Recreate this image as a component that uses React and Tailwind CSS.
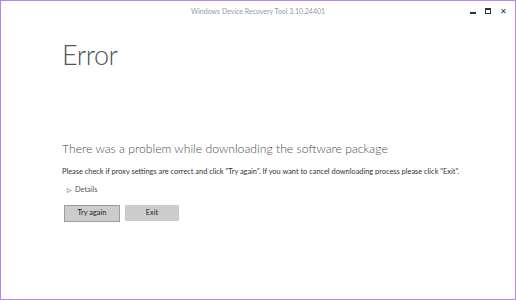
import { useState } from 'react';

export default function App() {
  const [open, setOpen] = useState(false);

  return (
    <div className="h-[300px] w-[516px] overflow-hidden bg-white font-['Lato',sans-serif] text-[#444]">
      <div className="flex h-full flex-col border border-[#b385f6]">
        <div className="relative flex h-[20px] shrink-0 items-center justify-center">
          <p className="text-[7px] text-[#9a9a9a]">Windows Device Recovery Tool 3.10.24401</p>
          <div className="absolute right-[8px] top-[6px] flex items-center gap-[9px]">
            <span className="block h-[2px] w-[6px] translate-y-[2px] bg-[#333]" />
            <span className="block h-[6px] w-[6px] border border-[#333] border-t-[2px]" />
            <span className="block text-[8px] leading-none text-[#333]">✕</span>
          </div>
        </div>

        <div className="flex flex-col pl-[61px]">
          <h1 className="mt-[20px] text-[27px] font-light leading-none tracking-[-0.5px] text-[#555]">Error</h1>

          <h2 className="mt-[72px] text-[12.2px] font-light text-[#4a4a4a]">
            There was a problem while downloading the software package
          </h2>
          <p className="mt-[8px] text-[7.4px] text-[#333]">
            Please check if proxy settings are correct and click "Try again". If you want to cancel downloading process please click "Exit".
          </p>

          <button
            className="mt-[7px] flex items-center gap-[3px] pl-[5px] text-[7.4px] text-[#555]"
            onClick={() => setOpen(!open)}
          >
            <span className="text-[6px] leading-none text-[#222]">{open ? '▼' : '▷'}</span>
            Details
          </button>

          <div className="mt-[9px] flex gap-[5px] pl-[2px]">
            <button className="h-[17px] w-[56px] border border-[#9c9c9c] bg-[#cccccc] text-[7.4px] text-[#222]">
              Try again
            </button>
            <button className="h-[16px] w-[54px] bg-[#cccccc] text-[7.4px] text-[#222]">Exit</button>
          </div>
        </div>
      </div>
    </div>
  );
}
